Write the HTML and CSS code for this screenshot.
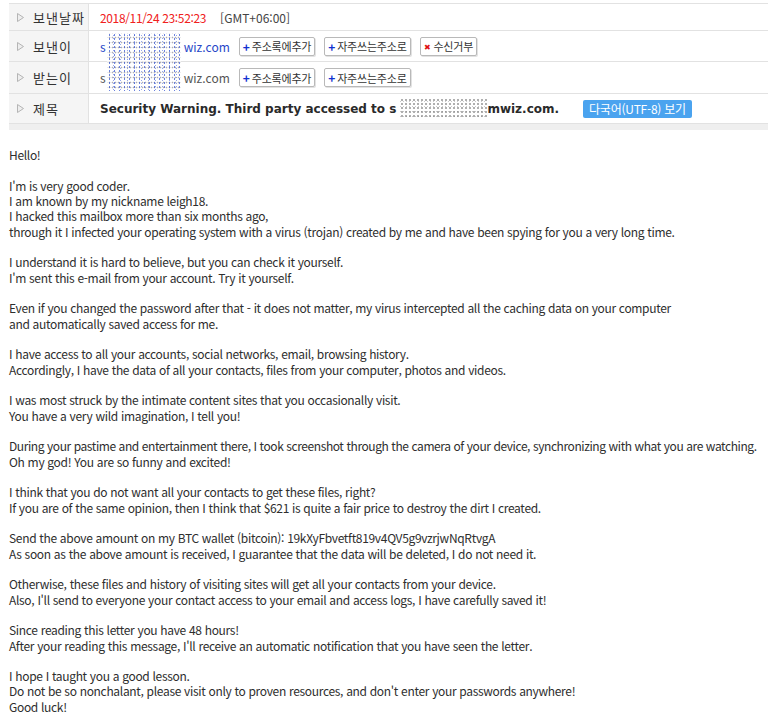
FILE: index.html
```html
<!DOCTYPE html>
<html lang="ko">
<head>
<meta charset="utf-8">
<title>Mail</title>
<link rel="stylesheet" href="styles.css">
</head>
<body>
<div class="page">
  <div class="header">
    <div class="row r1">
      <div class="label"><svg class="arr" width="7" height="9" viewBox="0 0 7 9"><polygon points="0.5,0.5 6.5,4.5 0.5,8.5" fill="#eee" stroke="#b5b5b5" stroke-width="1"/></svg>보낸날짜</div>
      <div class="val"><span class="date">2018/11/24 23:52:23</span><span class="tz">[GMT+06:00]</span></div>
    </div>
    <div class="row r2">
      <div class="label"><svg class="arr" width="7" height="9" viewBox="0 0 7 9"><polygon points="0.5,0.5 6.5,4.5 0.5,8.5" fill="#eee" stroke="#b5b5b5" stroke-width="1"/></svg>보낸이</div>
      <div class="val"><span class="addr from">s<span class="gap"></span>wiz.com</span>
        <span class="btn"><b class="plus">+</b>주소록에추가</span>
        <span class="btn"><b class="plus">+</b>자주쓰는주소로</span>
        <span class="btn"><b class="x">✖</b>수신거부</span>
      </div>
    </div>
    <div class="row r3">
      <div class="label"><svg class="arr" width="7" height="9" viewBox="0 0 7 9"><polygon points="0.5,0.5 6.5,4.5 0.5,8.5" fill="#eee" stroke="#b5b5b5" stroke-width="1"/></svg>받는이</div>
      <div class="val"><span class="addr">s<span class="gap"></span>wiz.com</span>
        <span class="btn"><b class="plus">+</b>주소록에추가</span>
        <span class="btn"><b class="plus">+</b>자주쓰는주소로</span>
      </div>
    </div>
    <div class="row r4">
      <div class="label"><svg class="arr" width="7" height="9" viewBox="0 0 7 9"><polygon points="0.5,0.5 6.5,4.5 0.5,8.5" fill="#eee" stroke="#b5b5b5" stroke-width="1"/></svg>제목</div>
      <div class="val"><span class="subject">Security Warning. Third party accessed to s<span class="gap2"></span>mwiz.com.</span><span class="utf">다국어(UTF-8) 보기</span></div>
    </div>
    <div class="noise n1"></div>
    <div class="noise n2"></div>
  </div>
  <div class="band"></div>
  <div class="mail">
<p>Hello!</p>
<p>I'm is very good coder.<br>I am known by my nickname leigh18.<br>I hacked this mailbox more than six months ago,<br>through it I infected your operating system with a virus (trojan) created by me and have been spying for you a very long time.</p>
<p>I understand it is hard to believe, but you can check it yourself.<br>I'm sent this e-mail from your account. Try it yourself.</p>
<p>Even if you changed the password after that - it does not matter, my virus intercepted all the caching data on your computer<br>and automatically saved access for me.</p>
<p>I have access to all your accounts, social networks, email, browsing history.<br>Accordingly, I have the data of all your contacts, files from your computer, photos and videos.</p>
<p>I was most struck by the intimate content sites that you occasionally visit.<br>You have a very wild imagination, I tell you!</p>
<p><span class="tight">During your pastime and entertainment there, I took screenshot through the camera of your device, synchronizing with what you are watching.</span><br>Oh my god! You are so funny and excited!</p>
<p>I think that you do not want all your contacts to get these files, right?<br>If you are of the same opinion, then I think that $621 is quite a fair price to destroy the dirt I created.</p>
<p>Send the above amount on my BTC wallet (bitcoin): 19kXyFbvetft819v4QV5g9vzrjwNqRtvgA<br>As soon as the above amount is received, I guarantee that the data will be deleted, I do not need it.</p>
<p>Otherwise, these files and history of visiting sites will get all your contacts from your device.<br>Also, I'll send to everyone your contact access to your email and access logs, I have carefully saved it!</p>
<p>Since reading this letter you have 48 hours!<br>After your reading this message, I'll receive an automatic notification that you have seen the letter.</p>
<p>I hope I taught you a good lesson.<br>Do not be so nonchalant, please visit only to proven resources, and don't enter your passwords anywhere!<br>Good luck!</p>
  </div>
</div>
</body>
</html>
```
FILE: styles.css
```css
html, body {
  margin: 0;
  padding: 0;
  background: #fff;
}
.page {
  padding: 3px 0 0 9px;
  font-family: "Noto Sans CJK KR", "Noto Sans", sans-serif;
  color: #333;
}
.header {
  position: relative;
  border-top: 1px solid #e2e2e2;
}
.row {
  display: grid;
  grid-template-columns: 80px 1fr;
  border-bottom: 1px solid #e2e2e2;
}
.r1 { height: 26px; }
.r2 { height: 30px; }
.r3 { height: 31px; }
.r4 { height: 29px; }
.label {
  background: #f5f5f5;
  border-right: 1px solid #e2e2e2;
  display: flex;
  align-items: center;
  font-size: 13px;
  color: #333;
  letter-spacing: 1px;
}
.arr {
  margin: 0 9px 0 8px;
}
.val {
  display: flex;
  align-items: center;
  padding-left: 11px;
  font-size: 12px;
  gap: 9px;
}
.date {
  color: #f02020;
  letter-spacing: -0.35px;
}
.tz {
  color: #444;
  margin-left: 5px;
}
.addr {
  color: #555;
  font-size: 12px;
}
.addr.from { color: #2747c8; }
.gap {
  display: inline-block;
  width: 78px;
}
.gap2 {
  display: inline-block;
  width: 91px;
}
.btn {
  display: inline-flex;
  align-items: center;
  height: 17px;
  padding: 0 3px 0 3px;
  border: 1px solid #b9b9b9;
  border-radius: 2px;
  background: #fff;
  box-shadow: 1px 1px 0 #e2e2e2;
  font-size: 11px;
  color: #333;
  letter-spacing: -0.2px;
}
.plus {
  color: #1030d0;
  font-weight: bold;
  font-size: 12px;
  margin-right: 2px;
}
.x {
  color: #e01010;
  font-size: 8px;
  margin-right: 3px;
  font-weight: normal;
}
.subject {
  font-weight: bold;
  font-size: 12px;
  letter-spacing: 0;
  color: #2a2a2a;
  font-family: "DejaVu Sans", "Noto Sans CJK KR", sans-serif;
}
.utf {
  margin-left: 15px;
  background: #4aa3ef;
  color: #fff;
  font-size: 12px;
  padding: 0 6px;
  height: 18px;
  display: inline-flex;
  align-items: center;
  border-radius: 2px;
  letter-spacing: -0.25px;
}
.noise {
  position: absolute;
  background-color: rgba(255,255,255,0.6);
  background-image:
    radial-gradient(circle, rgba(60,90,210,0.75) 0.7px, transparent 1.1px),
    radial-gradient(circle, rgba(120,120,130,0.6) 0.7px, transparent 1.1px),
    radial-gradient(circle, rgba(80,110,220,0.6) 0.6px, transparent 1px);
  background-size: 5px 4px, 3px 5px, 7px 3px;
  background-position: 0 0, 1px 2px, 3px 1px;
}
.n1 {
  left: 98px;
  top: 29px;
  width: 74px;
  height: 58px;
}
.n2 {
  left: 391px;
  top: 94px;
  width: 87px;
  height: 21px;
  background-image:
    radial-gradient(circle, rgba(120,120,120,0.6) 0.7px, transparent 1.1px),
    radial-gradient(circle, rgba(150,150,150,0.5) 0.6px, transparent 1px);
  background-size: 4px 4px, 3px 5px;
  background-position: 0 0, 2px 1px;
}
.band {
  height: 6px;
  background: #efefef;
}
.mail {
  padding-top: 17px;
  font-size: 12px;
  line-height: 15.33px;
  letter-spacing: -0.32px;
  white-space: nowrap;
  color: #2e2e2e;
}
.mail p {
  margin: 0 0 15.33px 0;
}
.mail p:last-child {
  margin-bottom: 0;
}
.tight {
  letter-spacing: -0.42px;
}
```
